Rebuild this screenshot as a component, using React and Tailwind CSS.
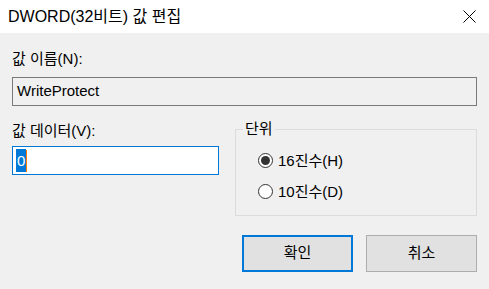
import React, { useState } from "react";

const font = { fontFamily: '"Liberation Sans", "Noto Sans CJK KR", sans-serif' };

const Radio = ({ checked, label, onClick }) => (
  <button onClick={onClick} className="flex items-center h-[20px] text-[15px] text-black">
    <span className="w-[15px] h-[15px] rounded-full border border-[#333] bg-white flex items-center justify-center">
      {checked && <span className="w-[9px] h-[9px] rounded-full bg-[#333]"></span>}
    </span>
    <span className="ml-[5px] leading-none">{label}</span>
  </button>
);

const App = () => {
  const [base, setBase] = useState("hex");

  return (
    <div style={font} className="w-[489px] h-[289px] bg-[#f0f0f0] overflow-hidden select-none">
      {/* Title bar */}
      <div className="h-[33px] bg-white flex items-center justify-between pl-[8px] pr-[12px]">
        <span className="text-[16px] text-black">DWORD(32비트) 값 편집</span>
        <svg width="13" height="13" viewBox="0 0 13 13" className="mr-[1px]">
          <path d="M0.5 0.5 L12.5 12.5 M12.5 0.5 L0.5 12.5" stroke="#000" strokeWidth="1" />
        </svg>
      </div>

      <div className="px-[12px]">
        {/* Value name */}
        <div className="mt-[16px] text-[15px] leading-[20px] text-black">값 이름(N):</div>
        <div className="mt-[8px] h-[29px] border border-[#7a7a7a] bg-[#f0f0f0] flex items-center pl-[4px] text-[15px] text-black w-[465px]">
          WriteProtect
        </div>

        <div className="flex mt-[15px]">
          {/* Value data */}
          <div className="w-[207px]">
            <div className="text-[15px] leading-[20px] text-black">값 데이터(V):</div>
            <div className="mt-[5px] h-[29px] border border-[#0078d7] bg-white flex items-center pl-[3px]">
              <span className="bg-[#0078d7] text-white text-[15px] leading-[23px] px-[1px]">0</span>
              <span className="w-[1px] h-[22px] bg-[#ff7a00]"></span>
            </div>
          </div>

          {/* Unit group */}
          <div className="ml-[16px] relative mt-[8px] w-[242px] h-[87px] border border-[#dcdcdc]">
            <span className="absolute -top-[11px] left-[7px] px-[2px] bg-[#f0f0f0] text-[15px] leading-[20px] text-black">단위</span>
            <div className="pt-[20px] pl-[22px] flex flex-col gap-[11px]">
              <Radio checked={base === "hex"} label="16진수(H)" onClick={() => setBase("hex")} />
              <Radio checked={base === "dec"} label="10진수(D)" onClick={() => setBase("dec")} />
            </div>
          </div>
        </div>

        {/* Buttons */}
        <div className="flex justify-end gap-[13px] mt-[19px]">
          <button className="w-[111px] h-[37px] border-2 border-[#0078d7] bg-[#e1e1e1] text-[15px] text-black">확인</button>
          <button className="w-[111px] h-[37px] border border-[#adadad] bg-[#e1e1e1] text-[15px] text-black">취소</button>
        </div>
      </div>
    </div>
  );
};

export default App;
